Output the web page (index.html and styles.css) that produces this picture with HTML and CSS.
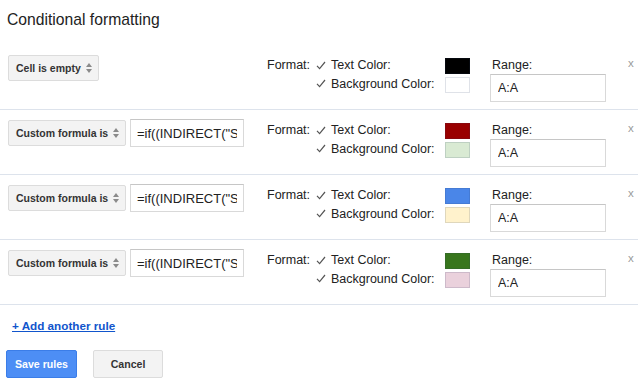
FILE: index.html
```html
<!DOCTYPE html>
<html>
<head>
<meta charset="utf-8">
<link rel="stylesheet" href="styles.css">
</head>
<body>
<div class="page">
  <h1 class="title">Conditional formatting</h1>
  <div class="rules">
    <div class="rule">
      <div class="left">
        <div class="select sel-short"><span>Cell is empty</span><svg class="arrows" width="6" height="10" viewBox="0 0 6 10"><path d="M0 4 L3 0 L6 4 Z M0 6 L3 10 L6 6 Z"/></svg></div>
      </div>
      <div class="format">
        <div class="flabel">Format:</div>
        <div class="checks">
          <div class="check"><svg width="10" height="9" viewBox="0 0 10 9"><path d="M1 4.8 L3.6 7.6 L9 1"/></svg><span>Text Color:</span></div>
          <div class="check"><svg width="10" height="9" viewBox="0 0 10 9"><path d="M1 4.8 L3.6 7.6 L9 1"/></svg><span>Background Color:</span></div>
        </div>
      </div>
      <div class="swatches">
        <div class="swatch" style="background:#000000"></div>
        <div class="swatch" style="background:#ffffff"></div>
      </div>
      <div class="range">
        <div class="rlabel">Range:</div>
        <input class="input rinput" type="text" value="A:A" readonly>
      </div>
      <div class="close">x</div>
    </div>

    <div class="rule">
      <div class="left">
        <div class="select sel-long"><span>Custom formula is</span><svg class="arrows" width="6" height="10" viewBox="0 0 6 10"><path d="M0 4 L3 0 L6 4 Z M0 6 L3 10 L6 6 Z"/></svg></div>
        <input class="input formula" type="text" value='=if((INDIRECT("Sheet1!A"&amp;ROW())="Yes"),TRUE,FALSE)' readonly>
      </div>
      <div class="format">
        <div class="flabel">Format:</div>
        <div class="checks">
          <div class="check"><svg width="10" height="9" viewBox="0 0 10 9"><path d="M1 4.8 L3.6 7.6 L9 1"/></svg><span>Text Color:</span></div>
          <div class="check"><svg width="10" height="9" viewBox="0 0 10 9"><path d="M1 4.8 L3.6 7.6 L9 1"/></svg><span>Background Color:</span></div>
        </div>
      </div>
      <div class="swatches">
        <div class="swatch" style="background:#990000"></div>
        <div class="swatch" style="background:#d9ead3"></div>
      </div>
      <div class="range">
        <div class="rlabel">Range:</div>
        <input class="input rinput" type="text" value="A:A" readonly>
      </div>
      <div class="close">x</div>
    </div>

    <div class="rule">
      <div class="left">
        <div class="select sel-long"><span>Custom formula is</span><svg class="arrows" width="6" height="10" viewBox="0 0 6 10"><path d="M0 4 L3 0 L6 4 Z M0 6 L3 10 L6 6 Z"/></svg></div>
        <input class="input formula" type="text" value='=if((INDIRECT("Sheet1!B"&amp;ROW())="Yes"),TRUE,FALSE)' readonly>
      </div>
      <div class="format">
        <div class="flabel">Format:</div>
        <div class="checks">
          <div class="check"><svg width="10" height="9" viewBox="0 0 10 9"><path d="M1 4.8 L3.6 7.6 L9 1"/></svg><span>Text Color:</span></div>
          <div class="check"><svg width="10" height="9" viewBox="0 0 10 9"><path d="M1 4.8 L3.6 7.6 L9 1"/></svg><span>Background Color:</span></div>
        </div>
      </div>
      <div class="swatches">
        <div class="swatch" style="background:#4a86e8"></div>
        <div class="swatch" style="background:#fff2cc"></div>
      </div>
      <div class="range">
        <div class="rlabel">Range:</div>
        <input class="input rinput" type="text" value="A:A" readonly>
      </div>
      <div class="close">x</div>
    </div>

    <div class="rule">
      <div class="left">
        <div class="select sel-long"><span>Custom formula is</span><svg class="arrows" width="6" height="10" viewBox="0 0 6 10"><path d="M0 4 L3 0 L6 4 Z M0 6 L3 10 L6 6 Z"/></svg></div>
        <input class="input formula" type="text" value='=if((INDIRECT("Sheet1!C"&amp;ROW())="Yes"),TRUE,FALSE)' readonly>
      </div>
      <div class="format">
        <div class="flabel">Format:</div>
        <div class="checks">
          <div class="check"><svg width="10" height="9" viewBox="0 0 10 9"><path d="M1 4.8 L3.6 7.6 L9 1"/></svg><span>Text Color:</span></div>
          <div class="check"><svg width="10" height="9" viewBox="0 0 10 9"><path d="M1 4.8 L3.6 7.6 L9 1"/></svg><span>Background Color:</span></div>
        </div>
      </div>
      <div class="swatches">
        <div class="swatch" style="background:#38761d"></div>
        <div class="swatch" style="background:#ead1dc"></div>
      </div>
      <div class="range">
        <div class="rlabel">Range:</div>
        <input class="input rinput" type="text" value="A:A" readonly>
      </div>
      <div class="close">x</div>
    </div>
  </div>

  <a class="add" href="#">+ Add another rule</a>

  <div class="buttons">
    <button class="btn btn-save">Save rules</button>
    <button class="btn btn-cancel">Cancel</button>
  </div>
</div>
</body>
</html>
```

FILE: styles.css
```css
html, body {
  margin: 0;
  padding: 0;
  background: #ffffff;
}

.page {
  font-family: "Liberation Sans", Arial, sans-serif;
  color: #222;
  width: 644px;
}

.title {
  margin: 0;
  padding: 10px 0 0 7px;
  font-size: 15.7px;
  font-weight: normal;
  line-height: 20px;
  height: 20px;
  margin-bottom: 15px;
  color: #222;
}

.rules {
  margin-right: 6px;
}

.rule {
  display: flex;
  align-items: flex-start;
  height: 65px;
  box-sizing: border-box;
  padding: 10px 0 0 8px;
  border-bottom: 1px solid #dde3ec;
}

.left {
  width: 259px;
  height: 26px;
  display: flex;
  align-items: center;
}

.select {
  height: 26px;
  box-sizing: border-box;
  border: 1px solid #dcdcdc;
  border-radius: 2px;
  background: #f3f3f3;
  display: flex;
  align-items: center;
  padding: 0 6px 0 7px;
  justify-content: space-between;
  font-size: 10.5px;
  font-weight: bold;
  color: #333;
}

.sel-short { width: 91px; }
.sel-long { width: 118px; }

.arrows {
  fill: #8a8a8a;
}

.input {
  display: block;
  box-sizing: border-box;
  height: 28px;
  margin: 0;
  border: 1px solid #d9d9d9;
  border-top-color: #c6c6c6;
  border-radius: 0;
  background: #fff;
  font-family: "Liberation Sans", Arial, sans-serif;
  font-size: 12.5px;
  color: #222;
  outline: none;
}

.formula {
  width: 114px;
  margin-left: 4px;
  padding: 0 6px 0 6px;
  font-size: 13px;
}

.format {
  display: flex;
  font-size: 12.5px;
  color: #222;
  margin-top: 1px;
}

.flabel {
  width: 49px;
  line-height: 18.5px;
}

.checks {
  width: 129px;
}

.check {
  display: flex;
  align-items: center;
  height: 18.5px;
  line-height: 18.5px;
}

.check svg {
  width: 10px;
  height: 9px;
  margin-right: 5px;
  fill: none;
  stroke: #555;
  stroke-width: 1.2;
}

.swatches {
  width: 45px;
  padding-top: 3px;
}

.swatch {
  width: 25px;
  height: 16px;
  box-sizing: border-box;
  border: 1px solid rgba(40, 60, 100, 0.15);
  margin-bottom: 3px;
}

.range {
  width: 117px;
  padding-top: 2px;
}

.rlabel {
  font-size: 12.5px;
  line-height: 16px;
  padding-left: 2px;
  margin-bottom: 1px;
  color: #222;
}

.rinput {
  width: 116px;
  padding: 0 0 0 7px;
}

.close {
  margin-left: 21px;
  font-size: 11.5px;
  line-height: 14px;
  color: #9a9a9a;
  padding-top: 1px;
}

.add {
  display: inline-block;
  margin: 13px 0 0 12px;
  font-size: 11.7px;
  font-weight: bold;
  line-height: 16px;
  color: #1155cc;
  text-decoration: underline;
}

.buttons {
  display: flex;
  gap: 16px;
  margin: 16px 0 0 6px;
}

.btn {
  height: 28px;
  box-sizing: border-box;
  border-radius: 2px;
  font-family: "Liberation Sans", Arial, sans-serif;
  font-size: 10.6px;
  font-weight: bold;
  padding: 0;
  cursor: pointer;
}

.btn-save {
  width: 71px;
  background: #4d8ef5;
  border: 1px solid #3b7de8;
  color: #fff;
}

.btn-cancel {
  width: 70px;
  background: #f3f3f3;
  border: 1px solid #dcdcdc;
  color: #333;
}
```
